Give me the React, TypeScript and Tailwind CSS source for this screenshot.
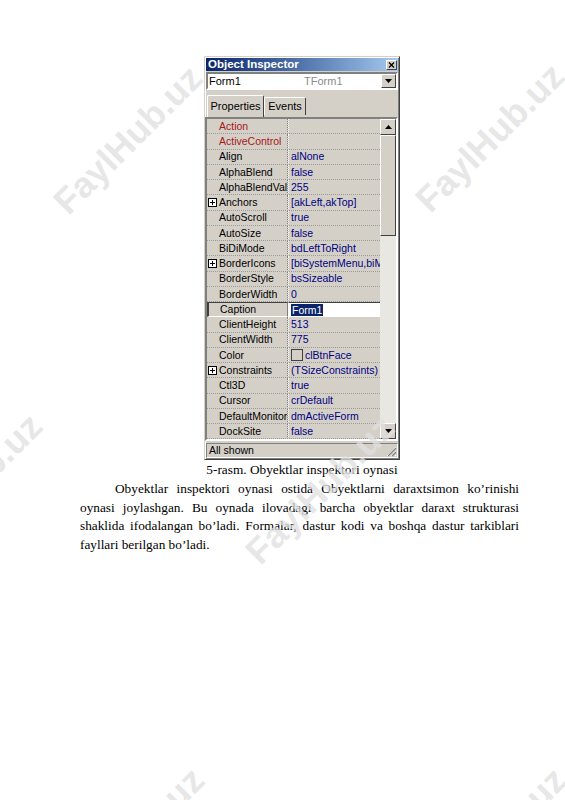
import React from "react";

type Prop = {
  name: string;
  value?: string;
  plus?: boolean;
  red?: boolean;
  selected?: boolean;
  swatch?: boolean;
};

const props: Prop[] = [
  { name: "Action", red: true },
  { name: "ActiveControl", red: true },
  { name: "Align", value: "alNone" },
  { name: "AlphaBlend", value: "false" },
  { name: "AlphaBlendValue", value: "255" },
  { name: "Anchors", value: "[akLeft,akTop]", plus: true },
  { name: "AutoScroll", value: "true" },
  { name: "AutoSize", value: "false" },
  { name: "BiDiMode", value: "bdLeftToRight" },
  { name: "BorderIcons", value: "[biSystemMenu,biMinimize,biMaximize]", plus: true },
  { name: "BorderStyle", value: "bsSizeable" },
  { name: "BorderWidth", value: "0" },
  { name: "Caption", value: "Form1", selected: true },
  { name: "ClientHeight", value: "513" },
  { name: "ClientWidth", value: "775" },
  { name: "Color", value: "clBtnFace", swatch: true },
  { name: "Constraints", value: "(TSizeConstraints)", plus: true },
  { name: "Ctl3D", value: "true" },
  { name: "Cursor", value: "crDefault" },
  { name: "DefaultMonitor", value: "dmActiveForm" },
  { name: "DockSite", value: "false" },
];

const marks = [
  "left-[128px] top-[140px]",
  "left-[490px] top-[138px]",
  "left-[-32px] top-[488px]",
  "left-[320px] top-[490px]",
  "left-[130px] top-[842px]",
  "left-[492px] top-[842px]",
];

export default function App() {
  return (
    <div className="relative w-[565px] h-[800px] overflow-hidden bg-white">
      <div className="flex flex-col pt-[56px] pl-[80px]">
        <Inspector />
        <p className="mt-[1px] pl-[5px] w-[439px] text-center text-[13.3px] leading-[18px] text-black font-['Liberation_Serif',serif]">
          5-rasm. Obyektlar inspektori oynasi
        </p>
        <div className="mt-[1px] w-[439px] text-[13.3px] leading-[18.5px] text-black font-['Liberation_Serif',serif]">
          <div className="pl-[35px] text-justify [text-align-last:justify]">
            Obyektlar inspektori oynasi ostida Obyektlarni daraxtsimon ko’rinishi
          </div>
          <div className="text-justify [text-align-last:justify]">
            oynasi joylashgan. Bu oynada ilovadagi barcha obyektlar daraxt strukturasi
          </div>
          <div className="text-justify [text-align-last:justify]">
            shaklida ifodalangan bo’ladi. Formalar, dastur kodi va boshqa dastur tarkiblari
          </div>
          <div>fayllari berilgan bo’ladi.</div>
        </div>
      </div>

      {marks.map((pos, i) => (
        <span
          key={i}
          className={`absolute ${pos} -translate-x-1/2 -translate-y-1/2 -rotate-45 whitespace-nowrap text-[36px] font-bold leading-none text-[#e0e0e0]/75 font-['Liberation_Sans',sans-serif] select-none pointer-events-none`}
        >
          FaylHub.uz
        </span>
      ))}
    </div>
  );
}

const Inspector = () => {
  return (
    <div className="ml-[124px] w-[196px] h-[404px] flex flex-col p-[1px] bg-[#d4d0c8] border border-[#d4d0c8] border-r-[#404040] border-b-[#404040] shadow-[inset_1px_1px_0_#ffffff,inset_-1px_-1px_0_#808080] font-['Liberation_Sans',sans-serif] text-black">
      {/* title bar */}
      <div className="h-[13px] flex items-center justify-between bg-gradient-to-r from-[#0a246a] to-[#a6caf0] pl-[2px] pr-[1px]">
        <span className="text-[11.5px] font-bold leading-none text-white">Object Inspector</span>
        <div className="w-[11px] h-[10px] flex items-center justify-center bg-[#d4d0c8] border border-[#ffffff] border-r-[#404040] border-b-[#404040]">
          <svg width="7" height="6" viewBox="0 0 7 6">
            <path d="M1 0.5 L6 5.5 M6 0.5 L1 5.5" stroke="#000" strokeWidth="1.3" />
          </svg>
        </div>
      </div>

      {/* combo */}
      <div className="mt-[1px] h-[18px] flex bg-white border-2 border-[#808080] border-r-[#ffffff] border-b-[#ffffff]">
        <span className="w-[96px] pl-[1px] text-[11px] leading-[14px]">Form1</span>
        <span className="flex-1 text-[11px] leading-[14px] text-[#8a8a8a]">TForm1</span>
        <div className="w-[15px] h-[14px] flex items-center justify-center bg-[#d4d0c8] border border-[#ffffff] border-r-[#404040] border-b-[#404040]">
          <svg width="7" height="4" viewBox="0 0 7 4">
            <path d="M0 0 H7 L3.5 4 Z" fill="#000" />
          </svg>
        </div>
      </div>

      {/* tabs */}
      <div className="h-[27px] flex items-end pl-[1px]">
        <div className="h-[22px] w-[57px] flex items-center justify-center rounded-t-[2px] border border-b-0 border-[#ffffff] border-r-[#404040] bg-[#d4d0c8] text-[11px]">
          Properties
        </div>
        <div className="mb-[2px] h-[18px] w-[42px] flex items-center justify-center rounded-t-[2px] border border-b-0 border-[#ffffff] border-r-[#404040] bg-[#d4d0c8] text-[11px]">
          Events
        </div>
      </div>

      {/* grid */}
      <div className="flex border-2 border-[#808080] border-r-[#ffffff] border-b-[#ffffff] -ml-[1px]">
        <div className="flex-1 min-w-0 flex flex-col">
          {props.map((p) => (
            <PropRow key={p.name} p={p} />
          ))}
        </div>
        <Scrollbar />
      </div>

      {/* status */}
      <div className="mt-auto h-[15px] flex items-center justify-between border border-[#808080] border-r-[#ffffff] border-b-[#ffffff]">
        <span className="pl-[2px] text-[10.5px] leading-none">All shown</span>
        <svg width="12" height="12" viewBox="0 0 12 12" className="self-end">
          <path d="M11 2 L2 11 M11 6 L6 11 M11 10 L10 11" stroke="#ffffff" strokeWidth="1" />
          <path d="M11 3 L3 11 M11 7 L7 11" stroke="#808080" strokeWidth="1.2" />
        </svg>
      </div>
    </div>
  );
};

const PropRow = ({ p }: { p: Prop }) => {
  return (
    <div className="h-[15.25px] flex text-[10.5px] leading-none">
      <div
        className={`relative w-[81px] shrink-0 flex items-center overflow-hidden whitespace-nowrap border-r border-[#808080] ${
          p.selected
            ? "border-t border-l-2 border-t-[#404040] border-l-[#404040] border-b border-b-[#ffffff] pl-[11px]"
            : "border-b border-dotted border-b-[#9a9a9a] pl-[12px]"
        }`}
      >
        {p.plus && (
          <div className="absolute left-[1px] top-[3px] w-[9px] h-[9px] flex items-center justify-center border border-[#000] bg-white">
            <svg width="5" height="5" viewBox="0 0 5 5">
              <path d="M0 2.5 H5 M2.5 0 V5" stroke="#000" strokeWidth="1" />
            </svg>
          </div>
        )}
        <span className={p.red ? "text-[#a81818]" : "text-black"}>{p.name}</span>
      </div>
      <div
        className={`flex-1 min-w-0 flex items-center overflow-hidden whitespace-nowrap border-l border-l-[#ffffff] pl-[2px] text-[#000080] ${
          p.selected ? "bg-white border-t border-t-[#404040]" : "border-b border-dotted border-b-[#9a9a9a]"
        }`}
      >
        {p.swatch && (
          <div className="mr-[2px] w-[12px] h-[12px] border border-[#404040] bg-[#d4d0c8] shrink-0" />
        )}
        {p.selected ? (
          <span className="bg-[#0a246a] text-white px-[1px] py-[1px]">{p.value}</span>
        ) : (
          <span>{p.value}</span>
        )}
      </div>
    </div>
  );
};

const Scrollbar = () => {
  return (
    <div className="w-[16px] shrink-0 flex flex-col bg-[#e9e7e2]">
      <ScrollBtn dir="up" />
      <div className="h-[101px] bg-[#d4d0c8] border border-[#ffffff] border-r-[#404040] border-b-[#404040]" />
      <div className="flex-1" />
      <ScrollBtn dir="down" />
    </div>
  );
};

const ScrollBtn = ({ dir }: { dir: "up" | "down" }) => (
  <div className="h-[16px] flex items-center justify-center bg-[#d4d0c8] border border-[#ffffff] border-r-[#404040] border-b-[#404040]">
    <svg width="7" height="4" viewBox="0 0 7 4">
      <path d={dir === "up" ? "M0 4 H7 L3.5 0 Z" : "M0 0 H7 L3.5 4 Z"} fill="#000" />
    </svg>
  </div>
);
